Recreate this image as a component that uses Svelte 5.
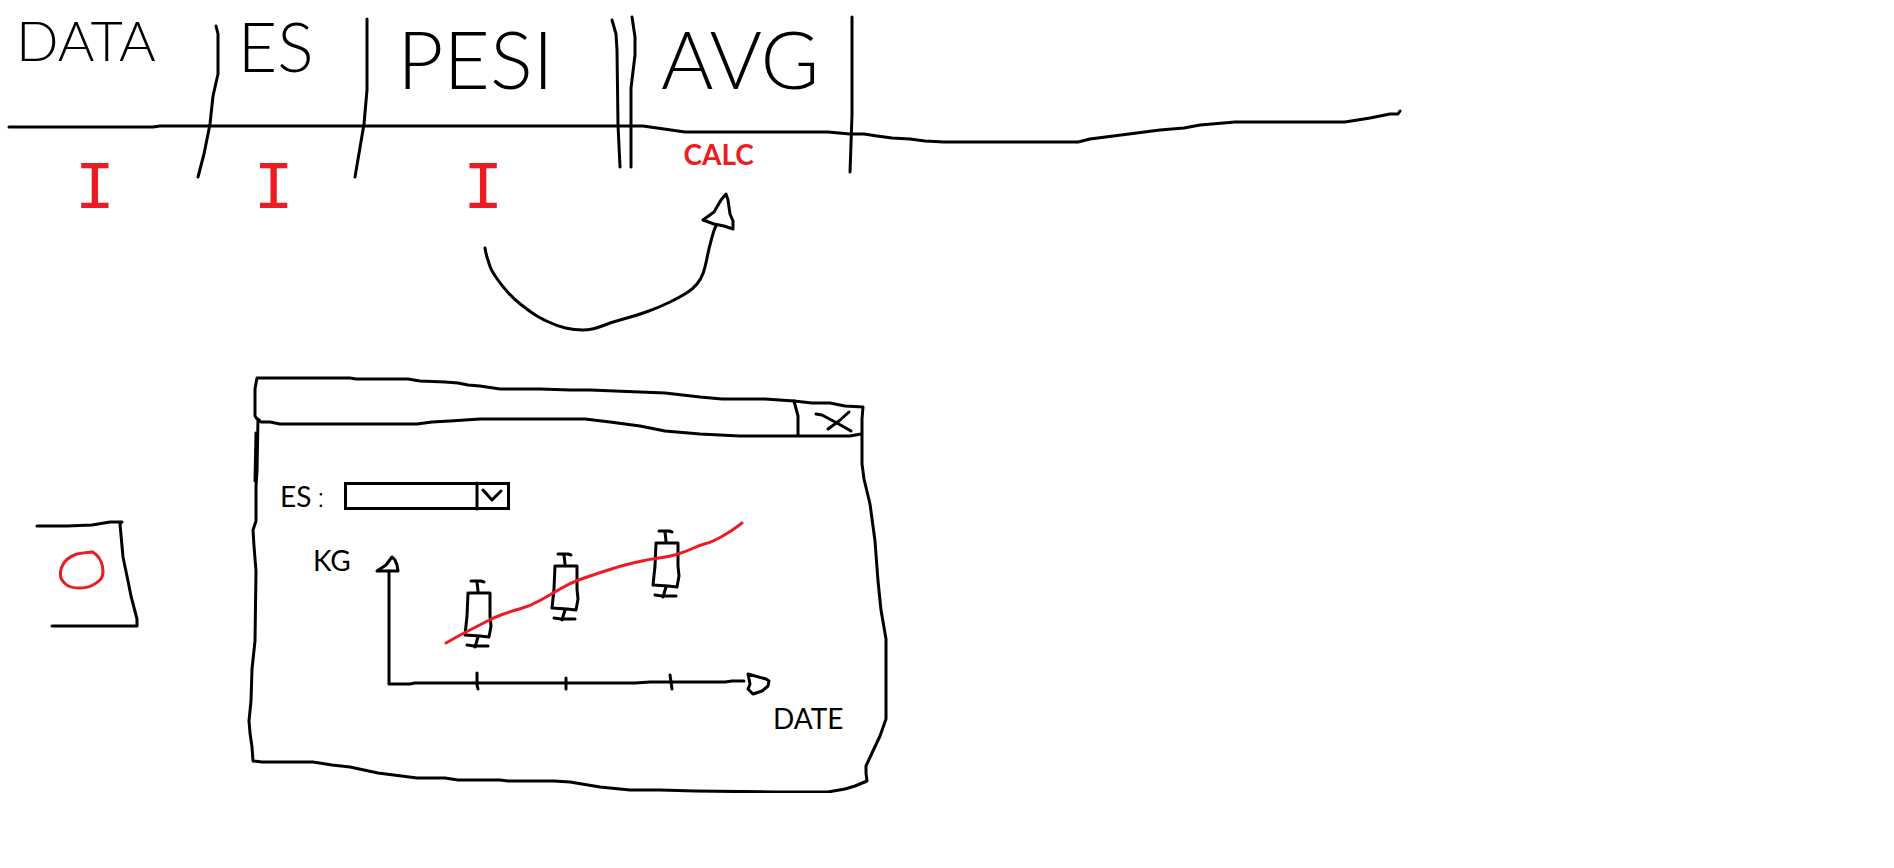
<script>
  const rules = [
    '9,127 153,127 160,126 630,126 643,126 664,129 685,132 828,132 850,134 864,134 877,136 892,138 910,139 925,141 944,142 1078,142 1090,139 1160,130 1184,128 1200,125 1235,122 1345,122 1370,118 1390,114 1398,114 1400,111',
    '216,26 218,34 218,74 213,96 210,124 204,154 198,177',
    '367,19 367,90 364,124 355,177',
    '612,20 616,34 617,50 618,125 620,167',
    '632,17 635,37 635,55 631,88 631,167',
    '852,17 852,70 852,115 850,172'
  ];

  const frame = [
    '257,418 255,415 255,388 257,377 350,377 356,378 408,378 420,380 445,381 458,382 468,384 480,385 500,388 540,388 570,389 590,389 665,392 700,396 722,398 765,398 794,400 812,402 830,402 845,405 863,406 862,418 862,463 864,478 870,503 875,540 878,580 881,609 886,638 886,718 880,735 872,752 866,765 866,772 867,780 855,785 845,788 828,791 775,791 695,790 660,789 630,789 600,786 570,781 554,780 508,780 500,779 458,779 445,777 417,777 378,772 350,766 332,764 313,761 262,761 253,760 252,746 250,732 249,720 251,700 252,668 255,640 256,570 254,545 253,529 256,520 256,485 257,470 258,418 261,421 270,421 280,423 417,423 432,421 450,420 480,418 585,418 610,421 640,425 665,430 700,433 740,435 850,435 861,433',
    '256,432 255,480',
    '794,400 798,415 798,434'
  ];

  const axes = [
    '389,570 389,683 410,683 415,682 635,682 650,681 725,681 732,680 744,680',
    '377,570 386,564 392,556 395,559 397,564 398,570 377,570',
    '748,673 766,678 769,680 768,685 762,690 753,693 748,688 750,683 748,673',
    '477,672 477,684 478,688',
    '566,677 566,688',
    '670,674 672,688'
  ];

  const candle = [
    '471,580 481,580 484,581',
    '477,581 478,590',
    '469,592 490,592 490,615 491,625 489,636 480,635 465,634 467,615 468,592',
    '478,636 475,646',
    '467,644 474,645 488,645'
  ];
  const candles = [[0, 0], [87, -27], [188, -50]];

  // Joins the midpoints of a point list with quadratic curves.
  function smooth(list) {
    const pts = list.split(' ').map((pair) => pair.split(',').map(Number));
    let d = `M${pts[0]}`;
    for (let i = 1; i < pts.length - 1; i += 1) {
      const [x, y] = pts[i];
      const [nx, ny] = pts[i + 1];
      d += ` Q${x} ${y} ${(x + nx) / 2} ${(y + ny) / 2}`;
    }
    return `${d} L${pts[pts.length - 1]}`;
  }

  const trend = smooth('446,642 460,634 478,625 495,616 512,610 530,605 550,594 570,582 590,575 620,565 650,558 668,556 685,551 700,544 712,541 730,531 742,522');
  const arc = smooth('485,248 486,254 488,260 491,270 502,286 515,300 528,310 538,317 557,326 574,330 592,330 612,322 635,316 660,307 680,297 693,289 701,279 705,268 709,248 714,230 716,226');
  const dot = smooth('93,551 80,552 71,555 63,562 60,571 61,579 70,587 87,587 97,582 103,576 103,565 99,556 93,551 90,551');

  let exercise = $state('');
</script>

<main>
  <section class="log">
    <svg class="rules" viewBox="0 0 1894 180" preserveAspectRatio="none" aria-hidden="true">
      {#each rules as points}<polyline {points} />{/each}
    </svg>
    <table>
      <colgroup>
        <col class="c-data" /><col class="c-es" /><col class="c-pesi" /><col class="c-avg" /><col />
      </colgroup>
      <thead>
        <tr>
          <th class="small">DATA</th>
          <th class="medium">ES</th>
          <th class="large">PESI</th>
          <th class="large inset">AVG</th>
          <td></td>
        </tr>
      </thead>
      <tbody>
        <tr>
          <td class="input">I</td>
          <td class="input wide">I</td>
          <td class="input">I</td>
          <td class="calc">CALC</td>
          <td></td>
        </tr>
      </tbody>
    </table>
  </section>

  <svg class="arrow" viewBox="480 190 260 144" aria-hidden="true">
    <path d={arc} />
    <polyline points="703,220 714,212 721,200 726,194 728,200 730,214 733,221 733,229 724,226 714,224 703,220" />
  </svg>

  <section class="mockup">
    <button class="launch" aria-label="Open chart">
      <svg viewBox="32 517 110 112" aria-hidden="true">
        <polyline points="37,525 67,525 92,524 110,521 122,521 120,523 123,556 128,580 131,595 137,618 137,625 52,625" />
        <path class="red" d={dot} />
      </svg>
    </button>

    <div class="window">
      <svg class="frame" viewBox="248 376 640 416" preserveAspectRatio="none" aria-hidden="true">
        {#each frame as points}<polyline {points} />{/each}
      </svg>
      <header>
        <button class="close" aria-label="Close">
          <svg viewBox="798 400 64 36" aria-hidden="true">
            <polyline points="816,413 822,414 837,422 851,430" />
            <polyline points="849,411 839,420 828,428" />
          </svg>
        </button>
      </header>
      <div class="field">
        <label for="exercise">ES<span class="colon">:</span></label>
        <div class="picker">
          <select id="exercise" bind:value={exercise}>
            <option value=""></option>
          </select>
          <svg viewBox="475 481 35 28" aria-hidden="true">
            <polyline points="477,482 477,508" />
            <polyline points="483,489 492,499 501,490" />
          </svg>
        </div>
      </div>
      <svg class="chart" viewBox="248 509 640 283">
        {#each axes as points}<polyline {points} />{/each}
        {#each candles as [x, y]}
          <g transform="translate({x} {y})">
            {#each candle as points}<polyline {points} />{/each}
          </g>
        {/each}
        <path class="red" d={trend} />
        <text x="313" y="570">KG</text>
        <text x="773" y="728">DATE</text>
      </svg>
    </div>
  </section>
</main>

<style>
  :global(body) {
    background: #fff;
  }

  main {
    color: #000;
    font-family: Lato, "Open Sans", sans-serif;
    overflow: hidden;
  }

  svg {
    display: block;
    overflow: visible;
  }

  path,
  polyline {
    fill: none;
    stroke: #000;
    stroke-width: 3px;
    stroke-linecap: round;
    stroke-linejoin: round;
    vector-effect: non-scaling-stroke;
  }

  .red {
    stroke: #ed1c24;
  }

  button {
    padding: 0;
    border: 0;
    background: none;
    cursor: pointer;
  }

  .log {
    position: relative;
  }

  .rules {
    position: absolute;
    top: 0;
    left: 0;
    width: 100%;
    height: 180px;
    pointer-events: none;
  }

  table {
    width: 100%;
    table-layout: fixed;
    border-collapse: collapse;
  }

  .c-data { width: 11.5%; }
  .c-es { width: 8%; }
  .c-pesi { width: 13.5%; }
  .c-avg { width: 12%; }

  th,
  td {
    padding: 0;
    vertical-align: top;
    line-height: 1;
  }

  th {
    height: 126px;
    box-sizing: border-box;
    padding: 12px 0 0 16px;
    font-weight: 300;
    text-align: left;
  }

  .small { font-size: 56px; }

  .medium {
    padding-left: 20px;
    font-size: 68px;
  }

  .large {
    padding: 18px 0 0 28px;
    font-size: 80px;
  }

  .inset { padding-left: 36px; }

  tbody td {
    color: #ed1c24;
    text-align: center;
  }

  .input {
    padding: 30px 28px 0 0;
    font-family: "Liberation Mono", monospace;
    font-size: 68px;
  }

  .wide { padding-right: 40px; }

  .calc {
    padding: 14px 40px 0 0;
    font-size: 28px;
    font-weight: 700;
  }

  .arrow {
    width: 260px;
    margin: -34px 0 43px 25.35%;
  }

  .mockup {
    display: grid;
    grid-template-columns: 248fr 640fr 1006fr;
    align-items: start;
  }

  .launch {
    width: 110px;
    margin: 141px 0 0 32px;
  }

  .window {
    position: relative;
  }

  .frame {
    position: absolute;
    inset: 0;
    width: 100%;
    height: 100%;
    pointer-events: none;
  }

  header {
    display: flex;
    justify-content: flex-end;
    padding: 24px 26px 2px 0;
  }

  .close {
    width: 64px;
    height: 36px;
  }

  .field {
    display: flex;
    align-items: center;
    gap: 20px;
    margin-top: 43px;
    padding-left: 32px;
  }

  label,
  text {
    font-size: 28px;
    line-height: 24px;
  }

  .colon {
    padding-left: 6px;
    font-weight: 300;
  }

  .picker {
    position: relative;
    width: 166px;
  }

  .picker svg {
    position: absolute;
    top: 0;
    right: 0;
    width: 35px;
    height: 28px;
    pointer-events: none;
  }

  select {
    display: block;
    width: 100%;
    height: 28px;
    padding: 0 36px 0 8px;
    border: 3px solid #000;
    border-radius: 0;
    background: #fff;
    appearance: none;
    font: inherit;
    font-size: 16px;
  }

  .chart {
    width: 100%;
    height: auto;
  }
</style>
